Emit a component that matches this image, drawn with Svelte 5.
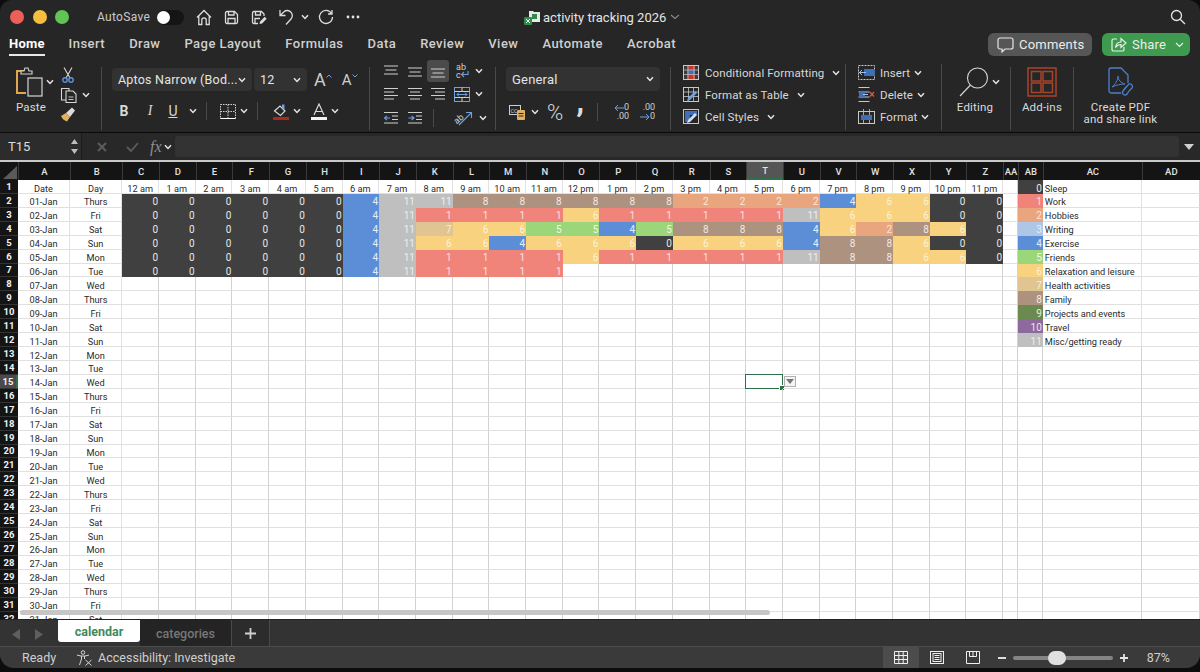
<script>
  const letters = 'ABCDEFGHIJKLMNOPQRSTUVWXYZ'.split('');
  const headers = [...letters, 'AA', 'AB', 'AC', 'AD'];
  const hours = ['12 am', '1 am', '2 am', '3 am', '4 am', '5 am', '6 am', '7 am', '8 am', '9 am', '10 am', '11 am',
    '12 pm', '1 pm', '2 pm', '3 pm', '4 pm', '5 pm', '6 pm', '7 pm', '8 pm', '9 pm', '10 pm', '11 pm'];
  const weekdays = ['Thurs', 'Fri', 'Sat', 'Sun', 'Mon', 'Tue', 'Wed'];
  const data = [
    [0,0,0,0,0,0,4,11,11,8,8,8,8,8,8,2,2,2,2,4,6,6,0,0],
    [0,0,0,0,0,0,4,11,1,1,1,1,6,1,1,1,1,1,11,6,6,6,0,0],
    [0,0,0,0,0,0,4,11,7,6,6,5,5,4,5,8,8,8,4,6,2,8,6,0],
    [0,0,0,0,0,0,4,11,6,6,4,6,6,6,0,6,6,6,4,8,8,6,0,0],
    [0,0,0,0,0,0,4,11,1,1,1,1,6,1,1,1,1,1,11,8,8,6,6,0],
    [0,0,0,0,0,0,4,11,1,1,1,1]
  ];
  const legend = ['Sleep', 'Work', 'Hobbies', 'Writing', 'Exercise', 'Friends', 'Relaxation and leisure',
    'Health activities', 'Family', 'Projects and events', 'Travel', 'Misc/getting ready'];
  const rows = Array.from({ length: 32 }, (_, i) => i + 1);
  const tabs = ['Insert', 'Draw', 'Page Layout', 'Formulas', 'Data', 'Review', 'View', 'Automate', 'Acrobat'];

  function dateLabel(row) {
    return String(row - 1).padStart(2, '0') + '-Jan';
  }
  function dayLabel(row) {
    return weekdays[(row - 2) % 7];
  }
</script>

{#snippet chev(cls = '')}
  <svg class="chev {cls}" width="8" height="6" viewBox="0 0 8 6"><path d="M1 1.2 4 4.4 7 1.2" fill="none" stroke="#e4e4e4" stroke-width="1.5"/></svg>
{/snippet}

{#snippet vlines(y)}
  <svg width="16" height="14" viewBox="0 0 16 14" stroke="#cfcfcf" stroke-width="1.2"><path d="M1 {y}H15M2.500 {y + 4}H13.500M1 {y + 8}H15"/></svg>
{/snippet}

{#snippet hlines(a, b)}
  <svg width="16" height="14" viewBox="0 0 16 14" stroke="#cfcfcf" stroke-width="1.2"><path d="M1 1.500H15M{a} 5H{b}M1 8.500H15M{a} 12H{b}"/></svg>
{/snippet}

<div class="window">
  <header class="titlebar">
    <div class="lights">
      <span class="light red"></span>
      <span class="light yellow"></span>
      <span class="light green"></span>
    </div>
    <span class="autosave">AutoSave</span>
    <span class="toggle"><span class="knob"></span></span>
    <div class="quick">
      <svg width="16" height="17" viewBox="0 0 16 17" fill="none" stroke="#dcdcdc" stroke-width="1.3"><path d="M1 8.5 8 1.5l7 7M2.8 7v8.500h3V11a2.2 2.2 0 0 1 4.400 0v4.500h3V7"/></svg>
      <svg width="15" height="15" viewBox="0 0 15 15" fill="none" stroke="#dcdcdc" stroke-width="1.3"><path d="M1.5 3a1.500 1.500 0 0 1 1.500-1.500h7.500l3 3V12a1.500 1.500 0 0 1-1.500 1.500H3A1.500 1.500 0 0 1 1.500 12zM4.500 1.500v3.500h5.500V1.500M4 13.500V8.500h7v5"/></svg>
      <svg width="16" height="15" viewBox="0 0 16 15" fill="none" stroke="#dcdcdc" stroke-width="1.3"><path d="M7 13.500H3A1.500 1.500 0 0 1 1.500 12V3A1.500 1.500 0 0 1 3 1.500h7.500l2.500 2.500v2M4.500 1.500V5h5V1.500M4 13V8.500h5"/><path d="M8.500 14l.6-2.600 4.600-4.600 2 2-4.600 4.600z" fill="#dcdcdc" stroke="none"/></svg>
      <svg class="undo" width="15" height="16" viewBox="0 0 15 16" fill="none" stroke="#dcdcdc" stroke-width="1.3"><path d="M1 1v5.500h5.500M1.300 6.200 5 2.800c1.500-1.300 4-1.600 6-.4 2.600 1.600 3 5 1.200 7.400L7 15.500"/></svg>
      {@render chev('undo-chev')}
      <svg width="16" height="16" viewBox="0 0 16 16" fill="none" stroke="#dcdcdc" stroke-width="1.3"><path d="M13.500 4.500A6.500 6.500 0 1 0 14.500 8M14 1v4h-4"/></svg>
      <svg width="14" height="4" viewBox="0 0 14 4" fill="#e4e4e4"><circle cx="2" cy="2" r="1.400"/><circle cx="7" cy="2" r="1.400"/><circle cx="12" cy="2" r="1.400"/></svg>
    </div>
    <div class="doc">
      <svg width="17" height="16" viewBox="0 0 17 16"><path d="M5 2h4l1 1h6v10H5z" fill="#e8e8e8"/><rect x="8" y="5" width="5" height="5" fill="#2f8a4c"/><rect x="0" y="8" width="8" height="8" rx="1" fill="#2f8a4c"/><path d="M2 10l4 4M6 10l-4 4" stroke="#fff" stroke-width="1"/></svg>
      <span>activity tracking 2026</span>
      <svg width="10" height="6" viewBox="0 0 10 6"><path d="M1 1l4 3.500L9 1" fill="none" stroke="#8a8a8a" stroke-width="1.100"/></svg>
    </div>
    <svg class="search" width="16" height="16" viewBox="0 0 16 16" fill="none" stroke="#e4e4e4" stroke-width="1.300"><circle cx="6.500" cy="6.500" r="5"/><path d="M10.200 10.200 15 15"/></svg>
  </header>

  <nav class="tabs">
    <span class="tab active">Home</span>
    {#each tabs as tab}
      <span class="tab">{tab}</span>
    {/each}
    <div class="tab-actions">
      <button class="comments">
        <svg width="17" height="16" viewBox="0 0 17 16" fill="none" stroke="#e6e6e6" stroke-width="1.200"><path d="M3 1h11a2 2 0 0 1 2 2v7a2 2 0 0 1-2 2H8l-3 3v-3H3a2 2 0 0 1-2-2V3a2 2 0 0 1 2-2z"/></svg>
        Comments
      </button>
      <button class="share">
        <svg width="16" height="15" viewBox="0 0 16 15" fill="none" stroke="#e6f4e8" stroke-width="1.200"><path d="M6 2H2.500A1.500 1.500 0 0 0 1 3.500v9A1.500 1.500 0 0 0 2.500 14h9a1.500 1.500 0 0 0 1.500-1.500V10M4.500 10.500C5 7 7.500 5 10 5V1.500L15 6l-5 4.500V7.500c-2 0-4 1-5.500 3z"/></svg>
        Share
        <svg class="share-chev" width="9" height="6" viewBox="0 0 9 6"><path d="M1 1l3.500 3.500L8 1" fill="none" stroke="#e6f4e8" stroke-width="1.200"/></svg>
      </button>
    </div>
  </nav>

  <section class="ribbon">
    <div class="group clipboard">
      <div class="paste">
        <div class="paste-top">
          <svg width="28" height="30" viewBox="0 0 28 30" fill="none">
            <path d="M13 4H2v22h9" stroke="#e0a651" stroke-width="2"/>
            <path d="M6 7V4h3l1-3h3l1 3h3v3z" stroke="#cfcfcf" stroke-width="1.200" fill="#262626"/>
            <rect x="13" y="11" width="14" height="18" fill="#2a2a2a" stroke="#d6d6d6" stroke-width="1.200"/>
          </svg>
          {@render chev()}
        </div>
        <span class="label">Paste</span>
      </div>
      <div class="clip-tools">
        <svg width="12" height="16" viewBox="0 0 12 16" fill="none"><path d="M2 0.500 8 11M10 0.500 4 11" stroke="#d8d8d8" stroke-width="1.100"/><circle cx="3" cy="13" r="2.200" stroke="#5f93d8" stroke-width="1.400"/><circle cx="9" cy="13" r="2.200" stroke="#5f93d8" stroke-width="1.400"/></svg>
        <div class="copy-row">
          <svg width="18" height="16" viewBox="0 0 18 16" fill="none" stroke="#d6d6d6" stroke-width="1.100"><path d="M6 13H1.500V1.500H9V4"/><path d="M6 4h7l3 3v8.500H6z"/><path d="M8.500 10h5M8.500 12.500h5" stroke-width="0.900"/></svg>
          {@render chev()}
        </div>
        <svg width="16" height="15" viewBox="0 0 16 15"><path d="M1 9l5-3 4 4-3 4.500C5 14 2 12 1 9z" fill="#e3b063"/><path d="M6 6l6-5.500 3 3L10 10z" fill="#dcdcdc"/></svg>
      </div>
    </div>

    <div class="group font">
      <div class="font-row">
        <div class="select font-name"><span>Aptos Narrow (Bod...</span>{@render chev()}</div>
        <div class="select font-size"><span>12</span>{@render chev()}</div>
        <span class="grow">A<svg width="6" height="4" viewBox="0 0 6 4"><path d="M.5 3.500 3 1l2.500 2.500" fill="none" stroke="#6fa0de" stroke-width="1"/></svg></span>
        <span class="shrink">A<svg width="6" height="4" viewBox="0 0 6 4"><path d="M.5 .5 3 3 5.500 .5" fill="none" stroke="#6fa0de" stroke-width="1"/></svg></span>
      </div>
      <div class="font-row second">
        <b class="fmt bold">B</b>
        <i class="fmt italic">I</i>
        <span class="fmt under">U</span>
        {@render chev()}
        <span class="vsep"></span>
        <svg width="16" height="15" viewBox="0 0 16 15" fill="none" stroke="#d0d0d0" stroke-width="1" stroke-dasharray="1.500 1"><path d="M.5 .5h15v14H.5zM8 .5v14M.5 7.500h15"/><path d="M.5 14.500h15" stroke-dasharray="none" stroke="#fff"/></svg>
        {@render chev()}
        <span class="vsep"></span>
        <svg class="fill-color" width="16" height="17" viewBox="0 0 16 17"><path d="M1.500 8 7 3l5 5-4.500 4.500z" fill="none" stroke="#d8d8d8" stroke-width="1.200"/><path d="M9 1.500h2.500V7L9 5z" fill="#6fa0de"/><rect y="14" width="16" height="3" fill="#b3261e"/></svg>
        {@render chev()}
        <svg class="font-color" width="16" height="17" viewBox="0 0 16 17"><path d="M3 12 8 1l5 11M4.800 8.500h6.400" fill="none" stroke="#d8d8d8" stroke-width="1.200"/><rect y="14" width="16" height="3" fill="#f2f2f2"/></svg>
        {@render chev()}
      </div>
    </div>

    <div class="group align">
      <div class="align-grid">
        {@render vlines(2)}
        {@render vlines(4)}
        <span class="pressed">{@render vlines(5)}</span>
        <span class="with-chev">
          <svg width="16" height="18" viewBox="0 0 16 18"><text x="2" y="8" class="svgt">ab</text><text x="2" y="16" class="svgt">c</text><path d="M14 9v3.500H8M10 10l-2.500 2.500L10 15" fill="none" stroke="#6fa0de" stroke-width="1.100"/></svg>
          {@render chev()}
        </span>
        {@render hlines(1, 11)}
        {@render hlines(3, 13)}
        {@render hlines(5, 15)}
        <span class="with-chev">
          <svg width="16" height="15" viewBox="0 0 16 15" fill="none"><rect x=".5" y=".5" width="15" height="14" stroke="#6fa0de"/><path d="M.5 4.500h15M.5 10.500h15M8 .5v4M8 10.500v4" stroke="#cfcfcf"/><path d="M3 7.500h10M5 5.500l-2 2 2 2M11 5.500l2 2-2 2" stroke="#6fa0de"/></svg>
          {@render chev()}
        </span>
        <svg width="16" height="14" viewBox="0 0 16 14" fill="none" stroke="#cfcfcf" stroke-width="1.100"><path d="M1 1.500h14M9 5h6M9 8.500h6M1 12h14"/><path d="M7 7H1.500M4 4.800 1.500 7 4 9.200" stroke="#6fa0de"/></svg>
        <svg width="16" height="14" viewBox="0 0 16 14" fill="none" stroke="#cfcfcf" stroke-width="1.100"><path d="M1 1.500h14M9 5h6M9 8.500h6M1 12h14"/><path d="M1.500 7H7M4.500 4.800 7 7 4.500 9.200" stroke="#6fa0de"/></svg>
        <span class="vsep align-sep"></span>
        <span class="with-chev">
          <svg width="20" height="18" viewBox="0 0 20 18"><text x="0" y="12" class="svgt" transform="rotate(-40 6 10)">ab</text><path d="M5 16 17 4M12 3.500h5.500V9" fill="none" stroke="#6fa0de" stroke-width="1.100"/></svg>
          {@render chev()}
        </span>
      </div>
    </div>

    <div class="group number">
      <div class="select general"><span>General</span>{@render chev()}</div>
      <div class="number-row">
        <svg width="16" height="15" viewBox="0 0 16 15"><rect x=".5" y=".5" width="11" height="9" fill="none" stroke="#cfcfcf"/><text x="1.500" y="8" class="svgt tiny">CC</text><rect x="8" y="5" width="8" height="10" rx="1" fill="#e3b063"/><path d="M9.500 8.500h5M9.500 11h5" stroke="#262626"/></svg>
        {@render chev()}
        <span class="percent">%</span>
        <b class="comma">,</b>
        <span class="vsep"></span>
        <span class="dec"><span><svg width="10" height="8" viewBox="0 0 10 8"><path d="M10 4H1M4 1 1 4l3 3" fill="none" stroke="#6fa0de"/></svg>0</span><span>.00</span></span>
        <span class="dec"><span>.00</span><span><svg width="10" height="8" viewBox="0 0 10 8"><path d="M0 4h9M6 1l3 3-3 3" fill="none" stroke="#6fa0de"/></svg>0</span></span>
      </div>
    </div>

    <div class="group styles">
      <div class="list-row">
        <svg width="16" height="15" viewBox="0 0 16 15"><rect x=".5" y=".5" width="15" height="14" fill="#3b3b3b" stroke="#c8c8c8"/><rect x="4" y="1" width="8" height="4" fill="#c0392b"/><rect x="4" y="9" width="8" height="5" fill="#c0392b"/><rect x="4" y="5" width="8" height="4" fill="#3f6fb5"/><path d="M5 1v13M11 1v13M1 5h14M1 9.500h14" stroke="#c8c8c8" stroke-width=".7"/></svg>
        <span>Conditional Formatting</span>{@render chev()}
      </div>
      <div class="list-row">
        <svg width="16" height="15" viewBox="0 0 16 15" fill="none"><rect x=".5" y=".5" width="15" height="14" stroke="#c8c8c8"/><path d="M1 5h14M1 9.500h14M5.500 1v13M10.500 1v13" stroke="#c8c8c8" stroke-width=".8"/><path d="M4 14l1-3 7-7 2 2-7 7z" fill="#6fa0de"/></svg>
        <span>Format as Table</span>{@render chev()}
      </div>
      <div class="list-row">
        <svg width="16" height="15" viewBox="0 0 16 15" fill="none"><rect x=".5" y=".5" width="15" height="14" stroke="#c8c8c8"/><rect x="2" y="2" width="12" height="4" fill="#3f6fb5"/><rect x="2" y="6" width="5" height="7" fill="#3f6fb5"/><path d="M4 14l1-3 7-7 2 2-7 7z" fill="#cfe0f5"/></svg>
        <span>Cell Styles</span>{@render chev()}
      </div>
    </div>

    <div class="group cells">
      <div class="list-row">
        <svg width="17" height="15" viewBox="0 0 17 15" fill="none"><rect x=".5" y=".5" width="16" height="14" stroke="#c8c8c8" stroke-dasharray="2 1"/><rect x="6" y="4" width="11" height="7" fill="#3f6fb5"/><path d="M1 7.500h7M4 5 1.500 7.500 4 10" stroke="#9cc2f0"/></svg>
        <span>Insert</span>{@render chev()}
      </div>
      <div class="list-row">
        <svg width="17" height="15" viewBox="0 0 17 15" fill="none"><path d="M.5 .5h11M.5 14.500h11M.5 5h11M.5 10h11" stroke="#c8c8c8"/><rect x="1" y="5" width="6" height="5" fill="#3f6fb5"/><path d="M5 7.500h5" stroke="#9cc2f0"/><path d="M12 5l4 4.500M16 5l-4 4.500" stroke="#d9584d" stroke-width="1.200"/></svg>
        <span>Delete</span>{@render chev()}
      </div>
      <div class="list-row">
        <svg width="17" height="15" viewBox="0 0 17 15" fill="none"><rect x=".5" y="2.500" width="16" height="12" stroke="#c8c8c8"/><path d="M5.500 0v15M11.500 0v15" stroke="#c8c8c8" stroke-width=".8"/><rect x="3" y="6" width="11" height="5" fill="#3f6fb5"/></svg>
        <span>Format</span>{@render chev()}
      </div>
    </div>

    <div class="group big editing">
      <div class="big-top">
        <svg width="30" height="30" viewBox="0 0 30 30" fill="none" stroke="#d8d8d8" stroke-width="1.100"><circle cx="18.500" cy="11" r="10"/><path d="M11.500 18 1 29"/></svg>
        {@render chev()}
      </div>
      <span class="label">Editing</span>
    </div>

    <div class="group big addins">
      <svg width="30" height="30" viewBox="0 0 30 30" fill="none" stroke="#a8432a" stroke-width="1.500"><rect x="1" y="1" width="28" height="28"/><rect x="4.500" y="4.500" width="9.500" height="9.500"/><rect x="16" y="4.500" width="9.500" height="9.500"/><rect x="4.500" y="16" width="9.500" height="9.500"/><rect x="16" y="16" width="9.500" height="9.500"/></svg>
      <span class="label">Add-ins</span>
    </div>

    <div class="group pdf">
      <svg width="26" height="30" viewBox="0 0 26 30" fill="none" stroke="#4f7fcc" stroke-width="1.300"><path d="M13 26H3a2 2 0 0 1-2-2V3a2 2 0 0 1 2-2h10l7 7v8"/><path d="M4 20c3-2 6-7 6-11 0 4 3 7 7 8-4 0-9 1-13 3z" stroke-width="1"/><path d="M15 24l5-6a2.500 2.500 0 0 1 4 3l-3 3M18 20l-3 4a2.500 2.500 0 0 0 4 3l2-3"/></svg>
      <span class="label">Create PDF<br />and share link</span>
    </div>
  </section>

  <div class="formula">
    <div class="namebox">
      <span>T15</span>
      <svg width="7" height="15" viewBox="0 0 7 15" fill="#bdbdbd"><path d="M3.500 0 7 5H0zM3.500 15 0 10h7z"/></svg>
    </div>
    <svg class="cross" width="10" height="10" viewBox="0 0 10 10"><path d="M1 1l8 8M9 1 1 9" stroke="#5c5c5c" stroke-width="2"/></svg>
    <svg class="check" width="13" height="10" viewBox="0 0 13 10"><path d="M1 5l4 4 7-8" fill="none" stroke="#5c5c5c" stroke-width="1.800"/></svg>
    <i class="fx">fx</i>
    {@render chev()}
    <div class="formula-input"></div>
    <svg class="formula-down" width="10" height="6" viewBox="0 0 10 6" fill="#cfcfcf"><path d="M0 0h10L5 6z"/></svg>
  </div>

  <div class="sheet">
    <div class="grid">
      <div class="corner"><svg width="14" height="13" viewBox="0 0 14 13"><path d="M14 0v13H0z" fill="#5a5a5a"/></svg></div>
      {#each headers as h}
        <div class="colhead" class:current={h === 'T'}>{h}</div>
      {/each}

      {#each rows as r}
        <div class="rowhead" class:current={r === 15}>{r}</div>
        <div class="cell center">{r === 1 ? 'Date' : dateLabel(r)}</div>
        <div class="cell center">{r === 1 ? 'Day' : dayLabel(r)}</div>
        {#each hours as hour, c}
          {@const val = r > 1 ? data[r - 2]?.[c] : undefined}
          {#if r === 1}
            <div class="cell center">{hour}</div>
          {:else if val !== undefined}
            <div class="cell num c{val}">{val}</div>
          {:else}
            <div class="cell">
              {#if r === 15 && c === 17}
                <span class="sel-box"></span>
                <span class="sel-drop"><svg width="8" height="5" viewBox="0 0 8 5" fill="#777"><path d="M0 0h8L4 5z"/></svg></span>
              {/if}
            </div>
          {/if}
        {/each}
        <div class="cell"></div>
        {#if r <= 12}
          <div class="cell num c{r - 1}">{r - 1}</div>
          <div class="cell legend">{legend[r - 1]}</div>
        {:else}
          <div class="cell"></div>
          <div class="cell"></div>
        {/if}
        <div class="cell"></div>
      {/each}
    </div>
    <div class="hscroll"></div>
  </div>

  <div class="sheetbar">
    <svg class="nav" width="8" height="11" viewBox="0 0 8 11" fill="#5f5f5f"><path d="M8 0v11L0 5.500z"/></svg>
    <svg class="nav next" width="8" height="11" viewBox="0 0 8 11" fill="#5f5f5f"><path d="M0 0v11l8-5.500z"/></svg>
    <div class="sheet-tab on">calendar</div>
    <div class="sheet-tab off">categories</div>
    <div class="add">
      <svg width="11" height="11" viewBox="0 0 11 11"><path d="M5.500 0v11M0 5.500h11" stroke="#cfcfcf" stroke-width="1.800"/></svg>
    </div>
  </div>

  <footer class="status">
    <span class="ready">Ready</span>
    <svg class="a11y" width="17" height="16" viewBox="0 0 17 16" fill="none" stroke="#d4d4d4" stroke-width="1"><circle cx="7" cy="2.500" r="1.800"/><path d="M1 5l4 1h4l4-1M5.500 6v3L3.500 15M8.500 6v3"/><path d="M9.500 10l6 5.500M15.500 10l-6 5.500"/></svg>
    <span class="a11y-text">Accessibility: Investigate</span>
    <div class="status-right">
      <span class="view on">
        <svg width="14" height="13" viewBox="0 0 14 13" fill="none" stroke="#efefef"><path d="M.5 .5h13v12H.5zM.5 4.500h13M.5 8.500h13M4.800 .5v12M9.200 .5v12"/></svg>
      </span>
      <span class="view">
        <svg width="14" height="13" viewBox="0 0 14 13" fill="none" stroke="#efefef"><rect x=".5" y=".5" width="13" height="12"/><rect x="3" y="2.500" width="8" height="8"/><path d="M4.500 4.500h5M4.500 6.500h5M4.500 8.500h5"/></svg>
      </span>
      <span class="view">
        <svg width="14" height="13" viewBox="0 0 14 13" fill="none" stroke="#efefef"><path d="M.5 .5h13v12H.5zM3.500 .5v5h7v-5M7 .5v5"/></svg>
      </span>
      <svg class="minus" width="8" height="2" viewBox="0 0 8 2"><rect width="8" height="2" fill="#dcdcdc"/></svg>
      <div class="slider"><span class="thumb"></span></div>
      <svg width="8" height="8" viewBox="0 0 8 8"><path d="M4 0v8M0 4h8" stroke="#e4e4e4" stroke-width="1.800"/></svg>
      <span class="zoom">87%</span>
    </div>
  </footer>
</div>

<style>
  :global(body) {
    margin: 0;
    background: #0d0d0d;
  }
  .window {
    width: 1200px;
    height: 668px;
    background: #262626;
    border-radius: 12px 12px 14px 14px;
    overflow: hidden;
    display: flex;
    flex-direction: column;
    font-family: Roboto, "Liberation Sans", sans-serif;
    color: #dcdcdc;
    font-size: 12px;
  }
  svg {
    flex: none;
    display: block;
  }

  .titlebar {
    height: 31px;
    flex: none;
    display: flex;
    align-items: center;
    padding: 3px 14px 0 10px;
    box-sizing: border-box;
  }
  .lights {
    display: flex;
    gap: 8.5px;
  }
  .light {
    width: 14px;
    height: 14px;
    border-radius: 50%;
  }
  .red { background: #ed5f59; }
  .yellow { background: #f4bf3e; }
  .green { background: #60c554; }
  .autosave {
    margin-left: 28px;
    width: 60px;
    font-size: 12px;
    letter-spacing: 0.3px;
    color: #c9c9c9;
  }
  .toggle {
    width: 27px;
    height: 15px;
    border-radius: 8px;
    background: #151515;
    display: flex;
    align-items: center;
  }
  .knob {
    width: 13px;
    height: 13px;
    border-radius: 50%;
    background: #fff;
  }
  .quick {
    display: flex;
    align-items: center;
    margin-left: 12px;
    gap: 12px;
  }
  .undo-chev {
    margin: 0 -3px 0 -5px;
  }
  .doc {
    display: flex;
    align-items: center;
    gap: 2px;
    margin-left: 164px;
    font-size: 13px;
    color: #e4e4e4;
  }
  .doc span {
    margin-right: 2px;
  }
  .search {
    margin-left: auto;
  }

  .tabs {
    height: 26px;
    flex: none;
    display: flex;
    align-items: flex-start;
    gap: 24px;
    padding-left: 9px;
    font-size: 13px;
    font-weight: 500;
    color: #cfcfcf;
  }
  .tab {
    padding-top: 5px;
    height: 23px;
    box-sizing: border-box;
    letter-spacing: 0.45px;
  }
  .tab.active {
    color: #fff;
    font-weight: 700;
    border-bottom: 2px solid #e8e8e8;
    height: 25px;
    letter-spacing: 0.2px;
  }
  .tab-actions {
    margin-left: auto;
    margin-right: 10px;
    display: flex;
    gap: 10px;
    margin-top: 2px;
  }
  button {
    border: 0;
    font: inherit;
    font-size: 13px;
    font-weight: 400;
    height: 23px;
    border-radius: 6px;
    display: flex;
    align-items: center;
    gap: 5px;
    padding: 0 9px;
    color: #ececec;
    letter-spacing: 0.2px;
  }
  .comments {
    width: 104px;
    background: #565656;
  }
  .share {
    width: 88px;
    background: #3d9a4f;
    box-sizing: border-box;
  }
  .share-chev {
    margin-left: 4px;
  }

  .ribbon {
    height: 75px;
    flex: none;
    display: flex;
    padding-bottom: 6px;
    box-sizing: border-box;
  }
  .group {
    box-sizing: border-box;
    border-right: 1px solid #4a4a4a;
    height: 63px;
    margin-top: 10px;
    flex: none;
    white-space: nowrap;
  }
  .label {
    font-size: 11.5px;
    color: #dadada;
    line-height: 12px;
    letter-spacing: 0.2px;
    text-align: center;
  }
  .clipboard {
    width: 102px;
    display: flex;
    padding-left: 15px;
    gap: 3px;
  }
  .paste {
    display: flex;
    flex-direction: column;
    width: 40px;
  }
  .paste-top {
    display: flex;
    align-items: center;
    gap: 3px;
    height: 30px;
    margin-bottom: 4px;
  }
  .paste .label {
    width: 32px;
  }
  .clip-tools {
    display: flex;
    flex-direction: column;
    gap: 4px;
    padding-left: 2px;
  }
  .clip-tools > svg:first-child {
    margin-left: 2px;
  }
  .copy-row {
    display: flex;
    align-items: center;
    gap: 4px;
  }
  .font {
    width: 268px;
    padding-left: 10px;
  }
  .font-row {
    display: flex;
    align-items: center;
    height: 25px;
  }
  .second {
    margin-top: 6px;
    padding-left: 5px;
    height: 26px;
  }
  .select {
    height: 23px;
    background: #323232;
    border-radius: 4px;
    box-sizing: border-box;
    display: flex;
    align-items: center;
    justify-content: space-between;
    padding: 0 6px;
    font-size: 12.5px;
    color: #e4e4e4;
    letter-spacing: 0.2px;
  }
  .font-name {
    width: 140px;
  }
  .font-size {
    width: 53px;
    margin-left: 2px;
  }
  .grow, .shrink {
    display: flex;
    align-items: flex-start;
    color: #cfcfcf;
    line-height: 18px;
  }
  .grow {
    font-size: 18px;
    margin-left: 7px;
  }
  .shrink {
    font-size: 15px;
    margin-left: 10px;
  }
  .grow svg, .shrink svg {
    margin-top: 3px;
  }
  .fmt {
    width: 14px;
    text-align: center;
    font-size: 14px;
    color: #d8d8d8;
    margin-right: 12px;
  }
  .under {
    text-decoration: underline;
    margin-right: 5px;
    margin-left: -3px;
  }
  .italic {
    font-family: "Liberation Serif", serif;
  }
  .vsep {
    width: 1px;
    height: 18px;
    background: #4a4a4a;
    flex: none;
  }
  .second .vsep {
    margin: 0 13px 0 9px;
  }
  .fill-color {
    margin-left: 2px;
  }
  .font-color {
    margin-left: 10px;
  }
  .second .chev {
    margin-left: 4px;
  }
  .align {
    width: 126px;
    padding-left: 13px;
  }
  .align-grid {
    display: grid;
    grid-template-columns: 23.5px 23.5px 23.5px 1fr;
    grid-auto-rows: 23.5px;
    align-items: center;
    margin-top: -8px;
  }
  .pressed {
    width: 22px;
    height: 22px;
    margin-left: -3px;
    background: #4b4b4b;
    border-radius: 3px;
    display: flex;
    align-items: center;
    justify-content: center;
  }
  .with-chev {
    display: flex;
    align-items: center;
    gap: 5px;
  }
  .svgt {
    font-size: 9px;
    fill: #cfcfcf;
    font-family: Roboto, sans-serif;
  }
  .tiny {
    font-size: 5.5px;
  }
  .align-sep {
    margin-left: 3px;
  }
  .number {
    width: 175px;
    padding-left: 10px;
  }
  .general {
    width: 154px;
    height: 24px;
    font-size: 13px;
  }
  .number-row {
    display: flex;
    align-items: center;
    margin-top: 8px;
    padding-left: 3px;
    height: 26px;
  }
  .number-row .chev {
    margin-left: 6px;
  }
  .percent {
    font-size: 22px;
    font-weight: 300;
    margin-left: 8px;
    color: #d8d8d8;
  }
  .comma {
    font-size: 32px;
    margin-left: 13px;
    line-height: 12px;
    margin-top: -22px;
  }
  .number-row .vsep {
    margin: 0 11px 0 13px;
  }
  .dec {
    display: flex;
    flex-direction: column;
    font-size: 9px;
    line-height: 9px;
    align-items: flex-end;
    width: 20px;
    margin-right: 6px;
    color: #cfcfcf;
  }
  .dec span {
    display: flex;
    align-items: center;
  }
  .styles, .cells {
    padding-left: 12px;
    display: flex;
    flex-direction: column;
    gap: 5px;
    margin-top: 7px;
    height: 66px;
  }
  .styles {
    width: 175px;
  }
  .cells {
    width: 96px;
  }
  .list-row {
    display: flex;
    align-items: center;
    gap: 6px;
    height: 17px;
    font-size: 11.5px;
    letter-spacing: 0.1px;
    color: #d8d8d8;
  }
  .list-row .chev {
    margin-left: 2px;
  }
  .cells .list-row {
    gap: 5px;
  }
  .cells .list-row .chev {
    margin-left: -1px;
  }
  .big {
    display: flex;
    flex-direction: column;
    align-items: center;
  }
  .editing {
    width: 69px;
    padding-right: 2px;
  }
  .big-top {
    display: flex;
    align-items: center;
    gap: 3px;
    height: 30px;
    margin-bottom: 4px;
    margin-left: 8px;
  }
  .addins {
    width: 63px;
    gap: 4px;
  }
  .pdf {
    width: 127px;
    border-right: 0;
    display: flex;
    flex-direction: column;
    align-items: center;
    gap: 4px;
    padding-right: 34px;
  }

  .formula {
    height: 28px;
    flex: none;
    box-sizing: border-box;
    border-top: 1px solid #0a0a0a;
    display: flex;
    align-items: center;
    background: #282828;
  }
  .namebox {
    width: 82px;
    height: 100%;
    box-sizing: border-box;
    display: flex;
    align-items: center;
    justify-content: space-between;
    padding: 0 3px 0 8px;
    font-size: 13px;
    border-right: 1px solid #1c1c1c;
    background: #2c2c2c;
  }
  .cross {
    margin-left: 15px;
  }
  .check {
    margin-left: 19px;
  }
  .fx {
    font-family: "Liberation Serif", serif;
    font-size: 16px;
    margin: 0 2px 0 11px;
    color: #8f8f8f;
  }
  .formula-input {
    flex: 1;
    height: 21px;
    margin-left: 3px;
    background: #333;
    border-radius: 3px;
  }
  .formula-down {
    margin: 0 6px 0 5px;
  }

  .sheet {
    flex: 1;
    min-height: 0;
    overflow: hidden;
    position: relative;
    background: #fff;
    border-top: 2px solid #c9c9c9;
    color: #222;
  }
  .grid {
    display: grid;
    grid-template-columns: 18px 52px 52.3px repeat(24, 36.71px) 14.7px 25px 99px 58px;
    grid-template-rows: 18px repeat(32, 13.93px);
    font-size: 9.2px;
  }
  .corner, .colhead, .rowhead {
    background: #141414;
    color: #e2e2e2;
    font-weight: 500;
    font-size: 9.5px;
    display: flex;
    align-items: center;
    justify-content: center;
    box-sizing: border-box;
  }
  .corner {
    align-items: flex-end;
    justify-content: flex-end;
    padding: 0 1px 1px 0;
  }
  .colhead {
    border-left: 1px solid #3a3a3a;
  }
  .colhead.current {
    background: #555;
    border-bottom: 2px solid #2f6f4a;
  }
  .rowhead {
    border-bottom: 1px solid #333;
    color: #f2f2f2;
    font-weight: 700;
  }
  .rowhead.current {
    background: #4a4a4a;
    border-right: 2px solid #2f6f4a;
  }
  .cell {
    box-sizing: border-box;
    border-right: 1px solid #d2d2d2;
    border-bottom: 1px solid #e0e0e0;
    padding-top: 1.5px;
    line-height: 14px;
    white-space: nowrap;
    color: #2a2a2a;
    position: relative;
  }
  .center {
    text-align: center;
    border-right-color: #e2e2e2;
  }
  .num {
    text-align: right;
    padding: 1.5px 1px 0 0;
    border: 0;
    font-size: 10px;
  }
  .legend {
    padding-left: 2px;
    border-right-color: #e0e0e0;
  }
  .c0 { background: #404040; color: #e8e8e8; }
  .c1 { background: #f0847a; color: #fbe0dc; }
  .c2 { background: #e8a57e; color: #fbe8dc; }
  .c3 { background: #aec6e8; color: #e4edf8; }
  .c4 { background: #5b8ed6; color: #e4eefa; }
  .c5 { background: #9bd67a; color: #effae6; }
  .c6 { background: #f8d27e; color: #fdf3d8; }
  .c7 { background: #e0c492; color: #f7efdf; }
  .c8 { background: #ae9280; color: #f2e9e3; }
  .c9 { background: #6a8a50; color: #e6eedd; }
  .c10 { background: #8d6a9e; color: #eee3f2; }
  .c11 { background: #bfbfbf; color: #eeeeee; }
  .sel-box {
    position: absolute;
    left: -1px;
    top: -1px;
    width: 38px;
    height: 15px;
    border: 1.5px solid #2f6f4a;
    box-sizing: border-box;
  }
  .sel-box::after {
    content: '';
    position: absolute;
    right: -3px;
    bottom: -3px;
    width: 4px;
    height: 4px;
    background: #2f6f4a;
    border: 1px solid #fff;
  }
  .sel-drop {
    position: absolute;
    left: 38px;
    top: 1px;
    width: 12px;
    height: 11px;
    border: 1px solid #b0b0b0;
    background: #f4f4f4;
    box-sizing: border-box;
    display: flex;
    align-items: center;
    justify-content: center;
  }
  .hscroll {
    position: absolute;
    left: 20px;
    right: 430px;
    bottom: 4px;
    height: 5px;
    border-radius: 3px;
    background: #c6c6c6;
  }

  .sheetbar {
    height: 27px;
    flex: none;
    display: flex;
    align-items: flex-start;
    background: #333;
    border-top: 1px solid #222;
    box-sizing: border-box;
  }
  .nav {
    margin: 9px 0 0 12px;
  }
  .nav.next {
    margin-left: 15px;
    margin-right: 15px;
  }
  .sheet-tab {
    height: 22px;
    font-size: 12.5px;
    font-weight: 700;
    display: flex;
    align-items: center;
    justify-content: center;
    box-sizing: border-box;
  }
  .sheet-tab.on {
    width: 82px;
    background: #fff;
    color: #3f8a5a;
    border-radius: 0 0 3px 3px;
  }
  .sheet-tab.off {
    width: 92px;
    background: #242424;
    color: #777;
    height: 26px;
    border-right: 1px solid #4a4a4a;
    font-weight: 500;
  }
  .add {
    width: 38px;
    height: 26px;
    display: flex;
    align-items: center;
    justify-content: center;
    border-right: 1px solid #4a4a4a;
    background: #2c2c2c;
    box-sizing: border-box;
  }
  .status {
    height: 22px;
    flex: none;
    display: flex;
    align-items: center;
    background: #3a3a3a;
    border-top: 1px solid #4c4c4c;
    box-sizing: border-box;
    padding-left: 22px;
    font-size: 12.5px;
    color: #cfcfcf;
  }
  .a11y {
    margin-left: 20px;
  }
  .a11y-text {
    margin-left: 5px;
  }
  .status-right {
    margin-left: auto;
    display: flex;
    align-items: center;
    height: 100%;
    padding-right: 30px;
  }
  .view {
    width: 36px;
    height: 100%;
    display: flex;
    align-items: center;
    justify-content: center;
  }
  .view.on {
    background: #4c4c4c;
  }
  .minus {
    margin-left: 7px;
  }
  .slider {
    width: 100px;
    height: 4px;
    border-radius: 2px;
    background: #858585;
    margin: 0 7px;
    position: relative;
  }
  .thumb {
    position: absolute;
    left: 35px;
    top: -5px;
    width: 18px;
    height: 14px;
    border-radius: 7px;
    background: #e0e0e0;
  }
  .zoom {
    margin-left: 19px;
  }
</style>
